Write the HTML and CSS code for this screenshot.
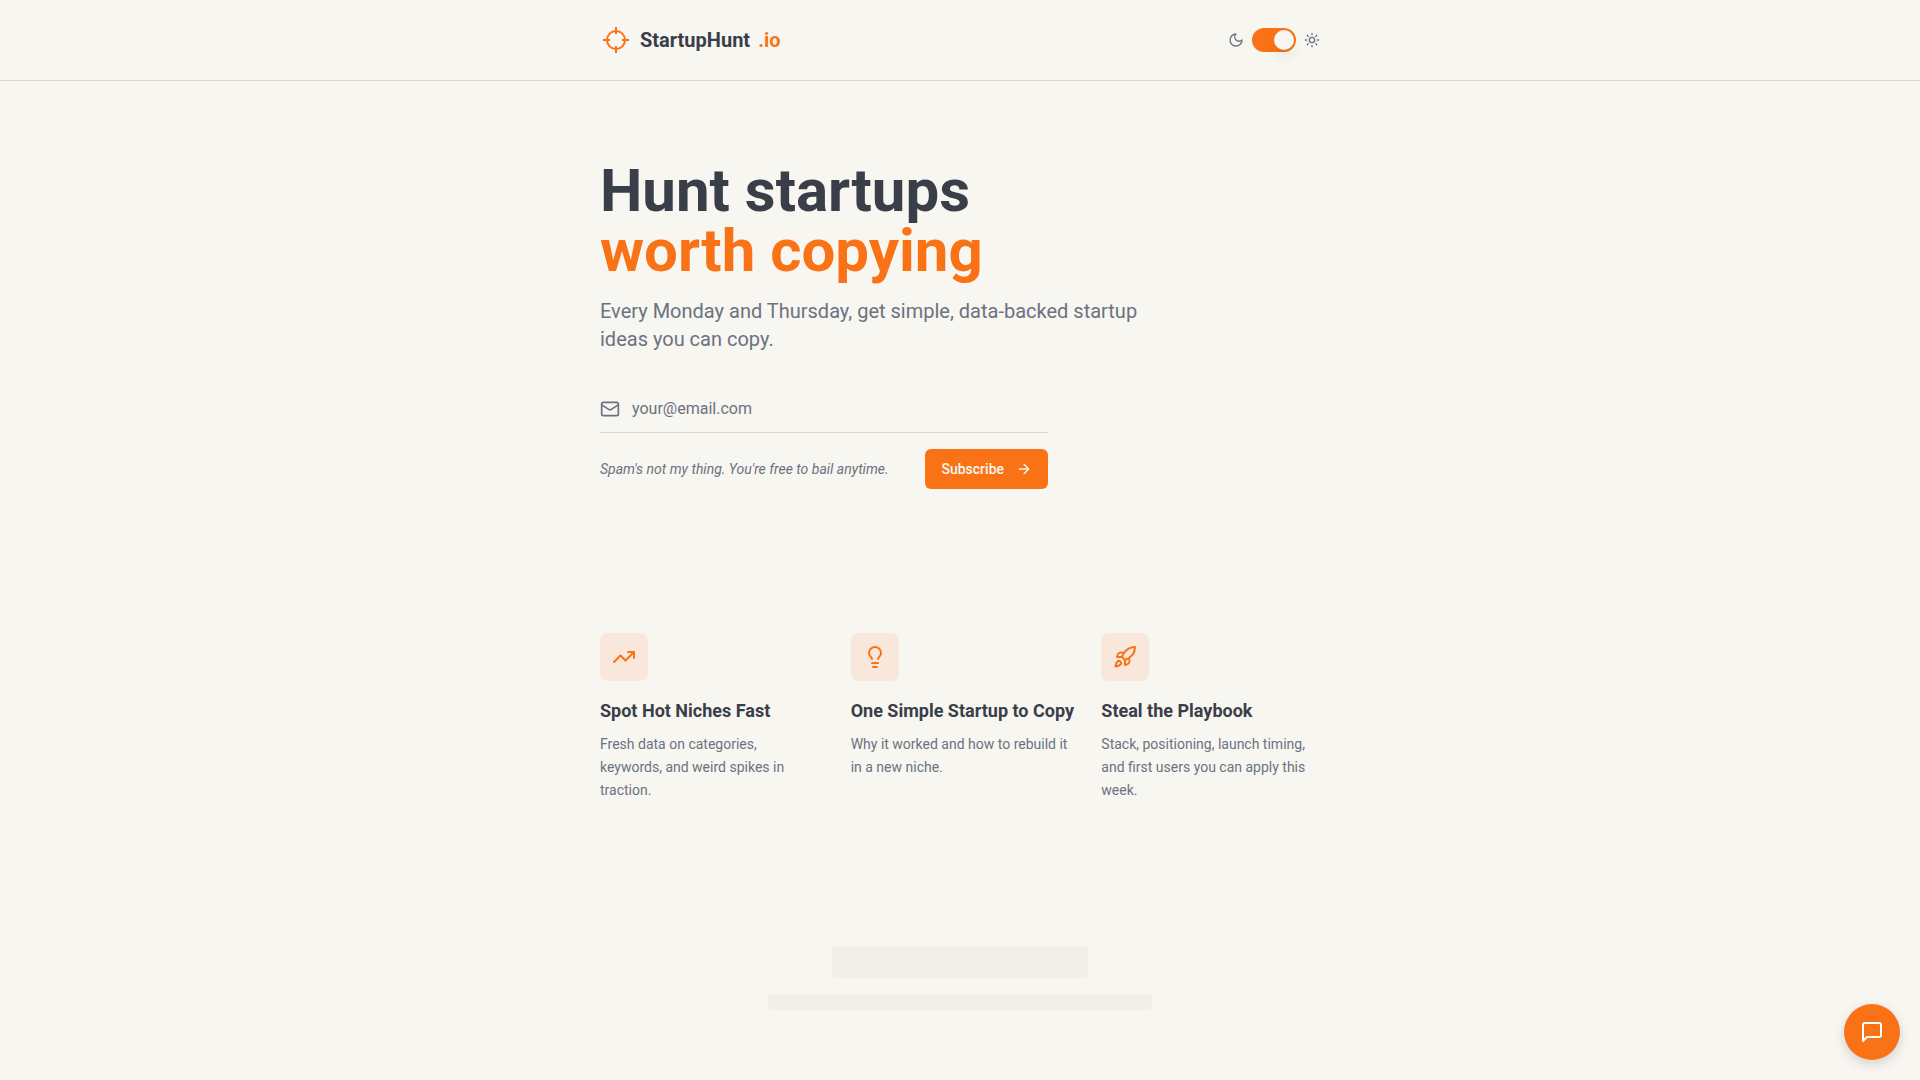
FILE: index.html
```html
<!DOCTYPE html>
<html lang="en">
<head>
<meta charset="UTF-8">
<meta name="viewport" content="width=device-width, initial-scale=1">
<title>StartupHunt.io</title>
<link rel="stylesheet" href="styles.css">
</head>
<body>

<header class="site-header">
  <div class="container header-row">
    <a href="#" class="logo">
      <svg class="logo-mark" viewBox="0 0 32 32"><circle cx="16" cy="16" r="9"/><path d="M16 3v7M16 22v7M3 16h7M22 16h7"/></svg>
      <span>StartupHunt</span>
      <span class="accent">.io</span>
    </a>
    <div class="theme-switch">
      <svg class="icon icon-sm" viewBox="0 0 24 24"><path d="M12 3a6 6 0 0 0 9 9 9 9 0 1 1-9-9Z"/></svg>
      <input type="checkbox" role="switch" class="switch" aria-label="Theme" checked>
      <svg class="icon icon-sm" viewBox="0 0 24 24"><circle cx="12" cy="12" r="4"/><path d="M12 2v2M12 20v2M4.93 4.93l1.41 1.41M17.66 17.66l1.41 1.41M2 12h2M20 12h2M6.34 17.66l-1.41 1.41M19.07 4.93l-1.41 1.41"/></svg>
    </div>
  </div>
</header>

<main class="container">
  <section class="hero">
    <h1>Hunt startups<br><span class="accent">worth copying</span></h1>
    <p class="lead">Every Monday and Thursday, get simple, data-backed startup ideas you can copy.</p>

    <form class="signup">
      <label class="field">
        <svg class="icon" viewBox="0 0 24 24"><rect width="20" height="16" x="2" y="4" rx="2"/><path d="m22 7-8.97 5.7a1.94 1.94 0 0 1-2.06 0L2 7"/></svg>
        <input type="email" placeholder="your@email.com" aria-label="Email">
      </label>
      <div class="signup-row">
        <p class="note">Spam's not my thing. You're free to bail anytime.</p>
        <button type="submit" class="btn">Subscribe
          <svg class="icon icon-sm" viewBox="0 0 24 24"><path d="M5 12h14M12 5l7 7-7 7"/></svg>
        </button>
      </div>
    </form>
  </section>

  <section class="features">
    <div class="feature">
      <div class="feature-icon">
        <svg class="icon icon-lg" viewBox="0 0 24 24"><path d="M22 7l-8.500 8.500-5-5L2 17"/><path d="M16 7h6v6"/></svg>
      </div>
      <h2>Spot Hot Niches Fast</h2>
      <p>Fresh data on categories, keywords, and weird spikes in traction.</p>
    </div>
    <div class="feature">
      <div class="feature-icon">
        <svg class="icon icon-lg" viewBox="0 0 24 24"><path d="M15 14c.2-1 .7-1.700 1.500-2.500 1-.9 1.500-2.200 1.500-3.500A6 6 0 0 0 6 8c0 1 .2 2.200 1.500 3.500.7.7 1.300 1.500 1.500 2.500"/><path d="M9 18h6M10 22h4"/></svg>
      </div>
      <h2>One Simple Startup to Copy</h2>
      <p>Why it worked and how to rebuild it in a new niche.</p>
    </div>
    <div class="feature">
      <div class="feature-icon">
        <svg class="icon icon-lg" viewBox="0 0 24 24"><path d="M4.500 16.500c-1.500 1.260-2 5-2 5s3.740-.5 5-2c.71-.84.7-2.130-.09-2.910a2.180 2.180 0 0 0-2.910-.09z"/><path d="m12 15-3-3a22 22 0 0 1 2-3.950A12.880 12.880 0 0 1 22 2c0 2.720-.78 7.500-6 11a22.350 22.350 0 0 1-4 2z"/><path d="M9 12H4s.55-3.030 2-4c1.620-1.080 5 0 5 0"/><path d="M12 15v5s3.030-.55 4-2c1.080-1.620 0-5 0-5"/></svg>
      </div>
      <h2>Steal the Playbook</h2>
      <p>Stack, positioning, launch timing, and first users you can apply this week.</p>
    </div>
  </section>

  <!-- loading placeholders -->
  <section class="loading">
    <div class="skeleton skeleton-title"></div>
    <div class="skeleton skeleton-text"></div>
  </section>
</main>

<button type="button" class="chat" aria-label="Feedback">
  <svg class="icon icon-lg" viewBox="0 0 24 24"><path d="M21 15a2 2 0 0 1-2 2H7l-4 4V5a2 2 0 0 1 2-2h14a2 2 0 0 1 2 2z"/></svg>
</button>

</body>
</html>
```
FILE: styles.css
```css
* {
  box-sizing: border-box;
}
body {
  margin: 0;
  background: #f7f6f1;
  color: #3a3e48;
  font-family: Roboto, "Liberation Sans", sans-serif;
  font-size: 16px;
  line-height: 24px;
}
h1, h2, p {
  margin: 0;
}
.container {
  width: 100%;
  max-width: 768px;
  margin: 0 auto;
  padding: 0 24px;
}
.accent {
  color: #f97316;
}

/* icons */
.icon {
  width: 20px;
  height: 20px;
  flex: none;
  fill: none;
  stroke: currentColor;
  stroke-width: 2;
  stroke-linecap: round;
  stroke-linejoin: round;
}
.icon-sm {
  width: 16px;
  height: 16px;
}
.icon-lg {
  width: 24px;
  height: 24px;
}

/* header */
.site-header {
  border-bottom: 1px solid #d9d8d3;
}
.header-row {
  display: flex;
  align-items: center;
  justify-content: space-between;
  height: 80px;
}
.logo {
  display: flex;
  align-items: center;
  gap: 8px;
  color: inherit;
  font-size: 20px;
  font-weight: 700;
  line-height: 28px;
  text-decoration: none;
}
.logo-mark {
  width: 32px;
  height: 32px;
  fill: none;
  stroke: #f97316;
  stroke-width: 2;
}
.theme-switch {
  display: flex;
  align-items: center;
  gap: 8px;
  color: #6b7280;
}
.switch {
  appearance: none;
  width: 44px;
  height: 24px;
  margin: 0;
  padding: 2px;
  border-radius: 12px;
  background: #f97316;
  cursor: pointer;
}
.switch::before {
  content: "";
  display: block;
  width: 20px;
  height: 20px;
  border-radius: 50%;
  background: #f7f6f1;
  box-shadow: 0 10px 15px -3px rgba(0, 0, 0, .1), 0 4px 6px -4px rgba(0, 0, 0, .1);
}
.switch:checked::before {
  margin-left: 20px;
}

/* hero */
.hero {
  padding: 80px 0;
}
h1 {
  font-size: 60px;
  font-weight: 700;
  line-height: 60px;
}
.lead {
  max-width: 576px;
  margin-top: 16px;
  color: #6b7280;
  font-size: 20px;
  line-height: 28px;
}
.signup {
  max-width: 448px;
  margin-top: 32px;
}
.field {
  display: flex;
  align-items: center;
  gap: 12px;
  height: 48px;
  border-bottom: 1px solid #dcdbcf;
  color: #6b7280;
}
.field input {
  flex: 1;
  min-width: 0;
  padding: 0;
  border: 0;
  outline: 0;
  background: none;
  color: #3a3e48;
  font: inherit;
}
.field input::placeholder {
  color: #6b7280;
}
.signup-row {
  display: flex;
  align-items: center;
  justify-content: space-between;
  margin-top: 16px;
}
.note {
  color: #6b7280;
  font-size: 14px;
  font-style: italic;
  line-height: 20px;
}
.btn {
  display: flex;
  align-items: center;
  gap: 12px;
  height: 40px;
  padding: 0 16px;
  border: 0;
  border-radius: 6px;
  background: #f97316;
  color: #f7f6f1;
  font: 500 14px/20px Roboto, "Liberation Sans", sans-serif;
  cursor: pointer;
}

/* features */
.features {
  display: grid;
  grid-template-columns: repeat(3, minmax(0, 1fr));
  gap: 32px;
  padding: 64px 0;
}
.feature-icon {
  display: flex;
  align-items: center;
  justify-content: center;
  width: 48px;
  height: 48px;
  border-radius: 8px;
  background: #fae7dc;
  color: #f97316;
}
.feature h2 {
  margin-top: 16px;
  font-size: 18px;
  font-weight: 700;
  line-height: 28px;
  white-space: nowrap;
}
.feature p {
  margin-top: 8px;
  color: #6b7280;
  font-size: 14px;
  line-height: 23px;
}

/* skeletons */
.loading {
  display: flex;
  flex-direction: column;
  align-items: center;
  gap: 16px;
  padding: 80px 0 64px;
}
.skeleton {
  max-width: 100%;
  border-radius: 4px;
  background: #f0efea;
}
.skeleton-title {
  width: 256px;
  height: 32px;
}
.skeleton-text {
  width: 384px;
  height: 16px;
}

.chat {
  position: fixed;
  right: 20px;
  bottom: 20px;
  display: flex;
  align-items: center;
  justify-content: center;
  width: 56px;
  height: 56px;
  padding: 0;
  border: 0;
  border-radius: 50%;
  background: #f97316;
  color: #fff;
  box-shadow: 0 4px 12px rgba(0, 0, 0, .15);
  cursor: pointer;
}

@media (max-width: 720px) {
  h1 {
    font-size: 40px;
    line-height: 44px;
  }
  .features {
    grid-template-columns: 1fr;
  }
}
```
